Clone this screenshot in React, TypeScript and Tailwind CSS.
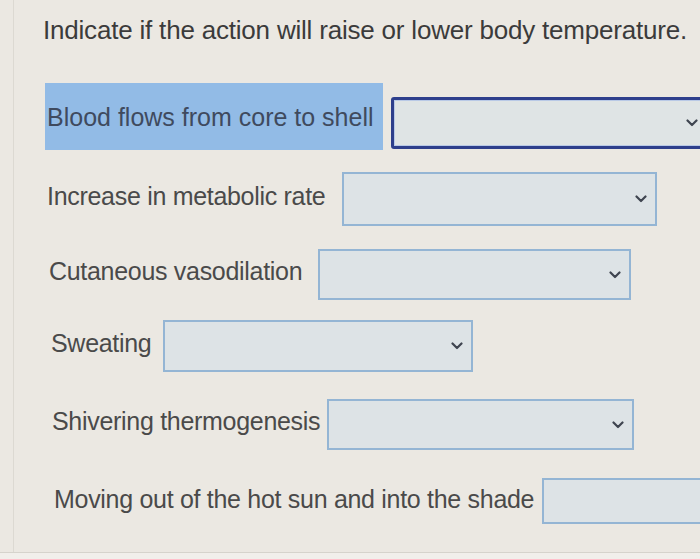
import React from "react"

const Chevron = () => (
  <svg width="12" height="8" viewBox="0 0 12 8" className="shrink-0">
    <path d="M1.5 1.5 L6 6 L10.5 1.5" fill="none" stroke="#3f4550" strokeWidth="2.2" strokeLinecap="round" strokeLinejoin="round" />
  </svg>
)

const Select = ({ w, h, focused, cls }: { w: string; h: string; focused?: boolean; cls?: string }) => (
  <div
    className={
      focused
        ? `${w} ${h} ${cls ?? ""} shrink-0 flex items-center justify-end pr-[8px] bg-[#dfe4e5] border-[3px] border-[#2e3f8c] rounded-[3px] shadow-[inset_0_0_0_1px_#b9c9e6]`
        : `${w} ${h} ${cls ?? ""} shrink-0 flex items-center justify-end pr-[8px] bg-[#dde3e6] border-2 border-[#94b5d4]`
    }
  >
    <Chevron />
  </div>
)

// row spacing follows the photo, which is a bit skewed
const rows = [
  { label: "Increase in metabolic rate", wrap: "mt-[22px] ml-[33px] gap-[17px]", w: "w-[315px]", h: "h-[54px]" },
  { label: "Cutaneous vasodilation", wrap: "mt-[23px] ml-[35px] gap-[16px]", w: "w-[313px]", h: "h-[51px]" },
  { label: "Sweating", wrap: "mt-[20px] ml-[37px] gap-[12px]", w: "w-[310px]", h: "h-[52px]" },
  { label: "Shivering thermogenesis", wrap: "mt-[27px] ml-[38px] gap-[7px]", w: "w-[307px]", h: "h-[51px]" },
]

export default function App() {
  return (
    <div className="w-[700px] h-[559px] overflow-hidden bg-[#ebe8e2] font-['Liberation_Sans',Arial,sans-serif]">
      <div className="w-[687px] h-[552px] border-l border-[#dcd9d2] ml-[13px] flex flex-col">
        <h1 className="ml-[29px] mt-[13px] text-[26px] leading-[34px] text-[#3b3b3b] tracking-[-0.2px] whitespace-nowrap">
          Indicate if the action will raise or lower body temperature.
        </h1>

        <div className="mt-[36px] ml-[31px] flex items-start">
          <div className="w-[338px] h-[67px] shrink-0 bg-[#92bbe6] flex items-center pl-[2px] pt-[2px]">
            <span className="text-[25px] text-[#3f4a5e] whitespace-nowrap">Blood flows from core to shell</span>
          </div>
          <Select w="w-[318px]" h="h-[52px]" focused cls="ml-[8px] mt-[14px]" />
        </div>

        {rows.map((r) => (
          <div key={r.label} className={`${r.wrap} flex items-center`}>
            <span className="text-[25px] text-[#4a4a4a] tracking-[-0.3px] whitespace-nowrap pb-[5px]">{r.label}</span>
            <Select w={r.w} h={r.h} />
          </div>
        ))}

        <div className="mt-[28px] ml-[40px] flex items-center gap-[8px]">
          <span className="text-[25px] text-[#4a4a4a] tracking-[-0.3px] whitespace-nowrap pb-[2px]">Moving out of the hot sun and into the shade</span>
          <Select w="w-[300px]" h="h-[46px]" />
        </div>
      </div>
      <div className="h-[7px] bg-[#f1efeb] border-t border-[#d6d3cc]" />
    </div>
  )
}
